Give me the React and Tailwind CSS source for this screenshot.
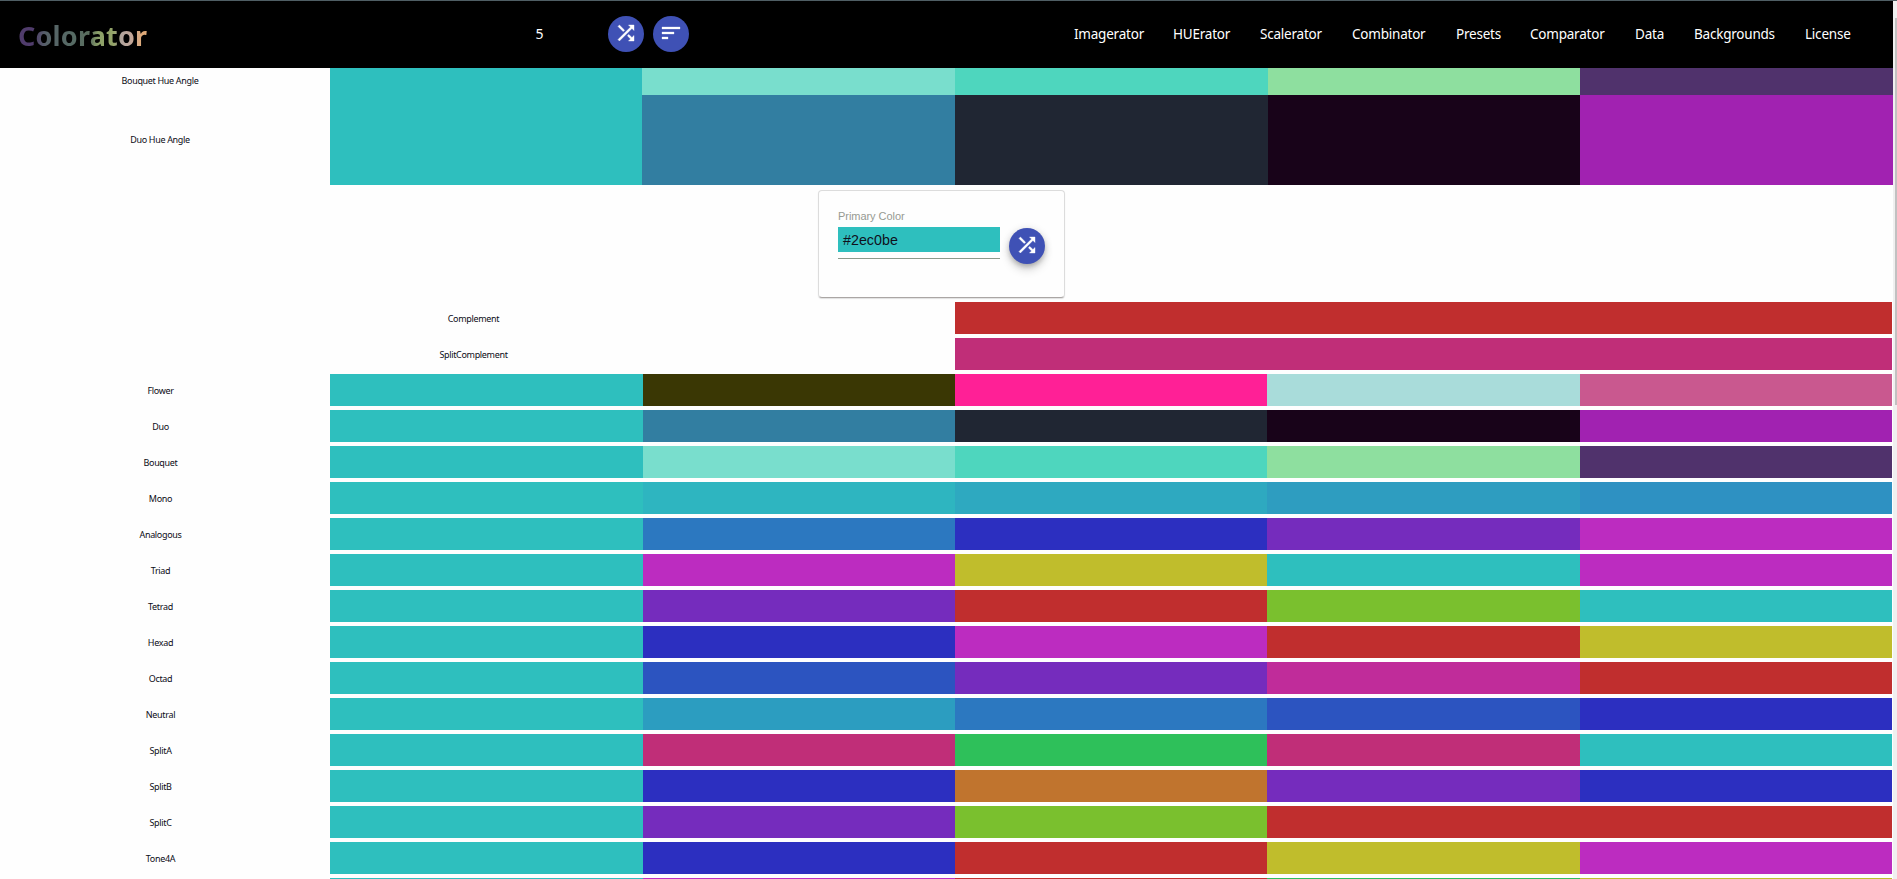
import React from "react";

const T = "#2ebfbe";
const BLUE = "#2c2fc0";
const PURPLE = "#752cbd";
const MAGENTA = "#bc2cc0";
const RED = "#c02e2e";
const YELLOW = "#c0bd2c";
const PINK = "#c02e78";
const GREEN = "#7ac02e";

const LINKS = ["Imagerator", "HUErator", "Scalerator", "Combinator", "Presets", "Comparator", "Data", "Backgrounds", "License"];
const LINK_WIDTHS = ["w-[99px]", "w-[87px]", "w-[92px]", "w-[104px]", "w-[74px]", "w-[105px]", "w-[59px]", "w-[111px]", "w-[47px]"];

const BOUQUET = [T, "#79decd", "#4ed6be", "#8edf9f", "#50326c"];
const DUO = [T, "#327ea1", "#202633", "#180319", "#a122b1"];

const ROWS = [
  ["Flower", [T, "#3a3704", "#ff2096", "#a9dcda", "#c9588f"]],
  ["Duo", DUO],
  ["Bouquet", BOUQUET],
  ["Mono", [T, "#2eb5c0", "#2ea9c0", "#2e9dc0", "#2e91c2"]],
  ["Analogous", [T, "#2c78c0", BLUE, PURPLE, MAGENTA]],
  ["Triad", [T, MAGENTA, YELLOW, T, MAGENTA]],
  ["Tetrad", [T, PURPLE, RED, GREEN, T]],
  ["Hexad", [T, BLUE, MAGENTA, RED, YELLOW]],
  ["Octad", [T, "#2c54c0", PURPLE, "#c02c9a", RED]],
  ["Neutral", [T, "#2c9dc0", "#2c78c0", "#2c54c0", BLUE]],
  ["SplitA", [T, PINK, "#2ec05a", PINK, T]],
  ["SplitB", [T, BLUE, "#c0742e", PURPLE, BLUE]],
  ["SplitC", [T, PURPLE, GREEN, RED, RED]],
  ["Tone4A", [T, BLUE, RED, YELLOW, MAGENTA]],
  ["", [T, MAGENTA, RED, "#2ec05a", YELLOW]],
];

function ShuffleIcon() {
  return (
    <svg viewBox="0 0 24 24" className="size-6 fill-white stroke-white stroke-[0.4px]">
      <path d="M10.59 9.17 5.41 4 4 5.41l5.17 5.17 1.42-1.41zM14.5 4l2.04 2.04L4 18.59 5.41 20 17.96 7.46 20 9.5V4h-5.5zm.33 9.41-1.41 1.41 3.13 3.13L14.5 20H20v-5.5l-2.04 2.04-3.13-3.13z" />
    </svg>
  );
}

function SortIcon() {
  return (
    <svg viewBox="0 0 24 24" className="size-6 fill-white stroke-white stroke-[0.3px]">
      <path d="M3 18h6v-2H3v2zM3 6v2h18V6H3zm0 7h12v-2H3v2z" />
    </svg>
  );
}

function Label({ children, className = "" }) {
  return (
    <div className={`flex shrink-0 items-center justify-center text-[9px] leading-none tracking-[-0.33px] text-[#0c0c16] ${className}`}>
      {children}
    </div>
  );
}

function HueRow({ name, colors, className }) {
  return (
    <div className={`flex ${className}`}>
      <Label className="mr-[10px] w-[320px] pb-[2px]">{name}</Label>
      <div className="grid w-[1563px] grid-cols-[312px_313px_313px_312px_313px]">
        {colors.map((c, i) => <div key={i} style={{ backgroundColor: c }} />)}
      </div>
    </div>
  );
}

function SchemeRow({ name, colors }) {
  return (
    <div className="flex h-8 shrink-0">
      <Label className="mr-[9px] w-[321px]">{name}</Label>
      <div className="grid w-[1562px] grid-cols-[313px_312px_312px_313px_312px]">
        {colors.map((c, i) => <div key={i} style={{ backgroundColor: c }} />)}
      </div>
    </div>
  );
}

function RoundButton({ children, className = "" }) {
  return (
    <button className={`flex size-9 shrink-0 items-center justify-center rounded-full bg-[#3f51b5] pb-[2px] text-white ${className}`}>
      {children}
    </button>
  );
}

export default function App() {
  return (
    <div className="flex h-[879px] w-[1897px] flex-col overflow-hidden bg-[#fefefe] font-['Noto_Sans',sans-serif]">
      <div className="h-px shrink-0 bg-[#4f5e64]" />
      <div className="flex min-h-0 flex-1">
        <div className="flex w-[1893px] shrink-0 flex-col">
          <header className="flex h-[67px] shrink-0 items-center bg-black pb-px text-white">
            <div className="w-[518px] pt-[4px] pl-[18px]">
              <span className="inline-block bg-[linear-gradient(90deg,#503c6c_0%,#503c6c_12%,#566268_22%,#566b63_45%,#5c6f5e_56%,#8ca068_62%,#93a368_74%,#b0a39c_80%,#c2a698_88%,#e0aa78_96%)] bg-clip-text text-[27px] leading-9 font-bold tracking-[0.2px] text-transparent">Colorator</span>
            </div>
            <div className="w-[43px] pb-[2px] text-center text-[14px]">5</div>
            <div className="ml-[47px] flex gap-[9px]">
              <RoundButton><ShuffleIcon /></RoundButton>
              <RoundButton><SortIcon /></RoundButton>
            </div>
            <nav className="ml-[385px] flex text-[13.5px] tracking-[-0.22px] whitespace-nowrap">
              {LINKS.map((l, i) => <a key={l} className={LINK_WIDTHS[i]}>{l}</a>)}
            </nav>
          </header>
          <HueRow name="Bouquet Hue Angle" colors={BOUQUET} className="h-[27px] shrink-0" />
          <HueRow name="Duo Hue Angle" colors={DUO} className="h-[90px] shrink-0" />
          <div className="flex h-[117px] shrink-0 pt-[5px] pl-[818px]">
            <section className="flex h-[108px] w-[247px] rounded-[4px] border border-[#dcdcdc] border-b-[#aaa6a4] pl-[19px] font-['Liberation_Sans',sans-serif] shadow-[0_1px_1px_rgba(0,0,0,0.12)]">
              <div className="w-[162px] pt-[18px]">
                <div className="h-[18px] text-[11px] leading-[14px] tracking-[-0.05px] text-[#969a92]">Primary Color</div>
                <div className="flex h-[25px] items-center bg-[#2ebfbe] pt-[2px] pl-[5px] text-[14.3px] text-[#10101c]">#2ec0be</div>
                <div className="mt-[6px] h-px bg-[#8c998c]" />
              </div>
              <RoundButton className="mt-[37px] ml-[9px] shadow-[0_3px_5px_-1px_rgba(0,0,0,0.2),0_6px_10px_rgba(0,0,0,0.14),0_1px_8px_rgba(0,0,0,0.12)]"><ShuffleIcon /></RoundButton>
            </section>
          </div>
          <div className="flex flex-col gap-1">
            {[["Complement", RED], ["SplitComplement", PINK]].map(([name, c]) => (
              <div key={name} className="flex h-8 shrink-0 pl-[317px]">
                <Label className="mr-[325px] w-[313px]">{name}</Label>
                <div className="w-[937px]" style={{ backgroundColor: c }} />
              </div>
            ))}
            {ROWS.map(([name, colors], i) => <SchemeRow key={i} name={name} colors={colors} />)}
          </div>
        </div>
        <div className="w-1 bg-[#f0f0f0] pt-[17px] pl-[2px]">
          <div className="h-[387px] bg-[#c1c1c1]" />
        </div>
      </div>
    </div>
  );
}
